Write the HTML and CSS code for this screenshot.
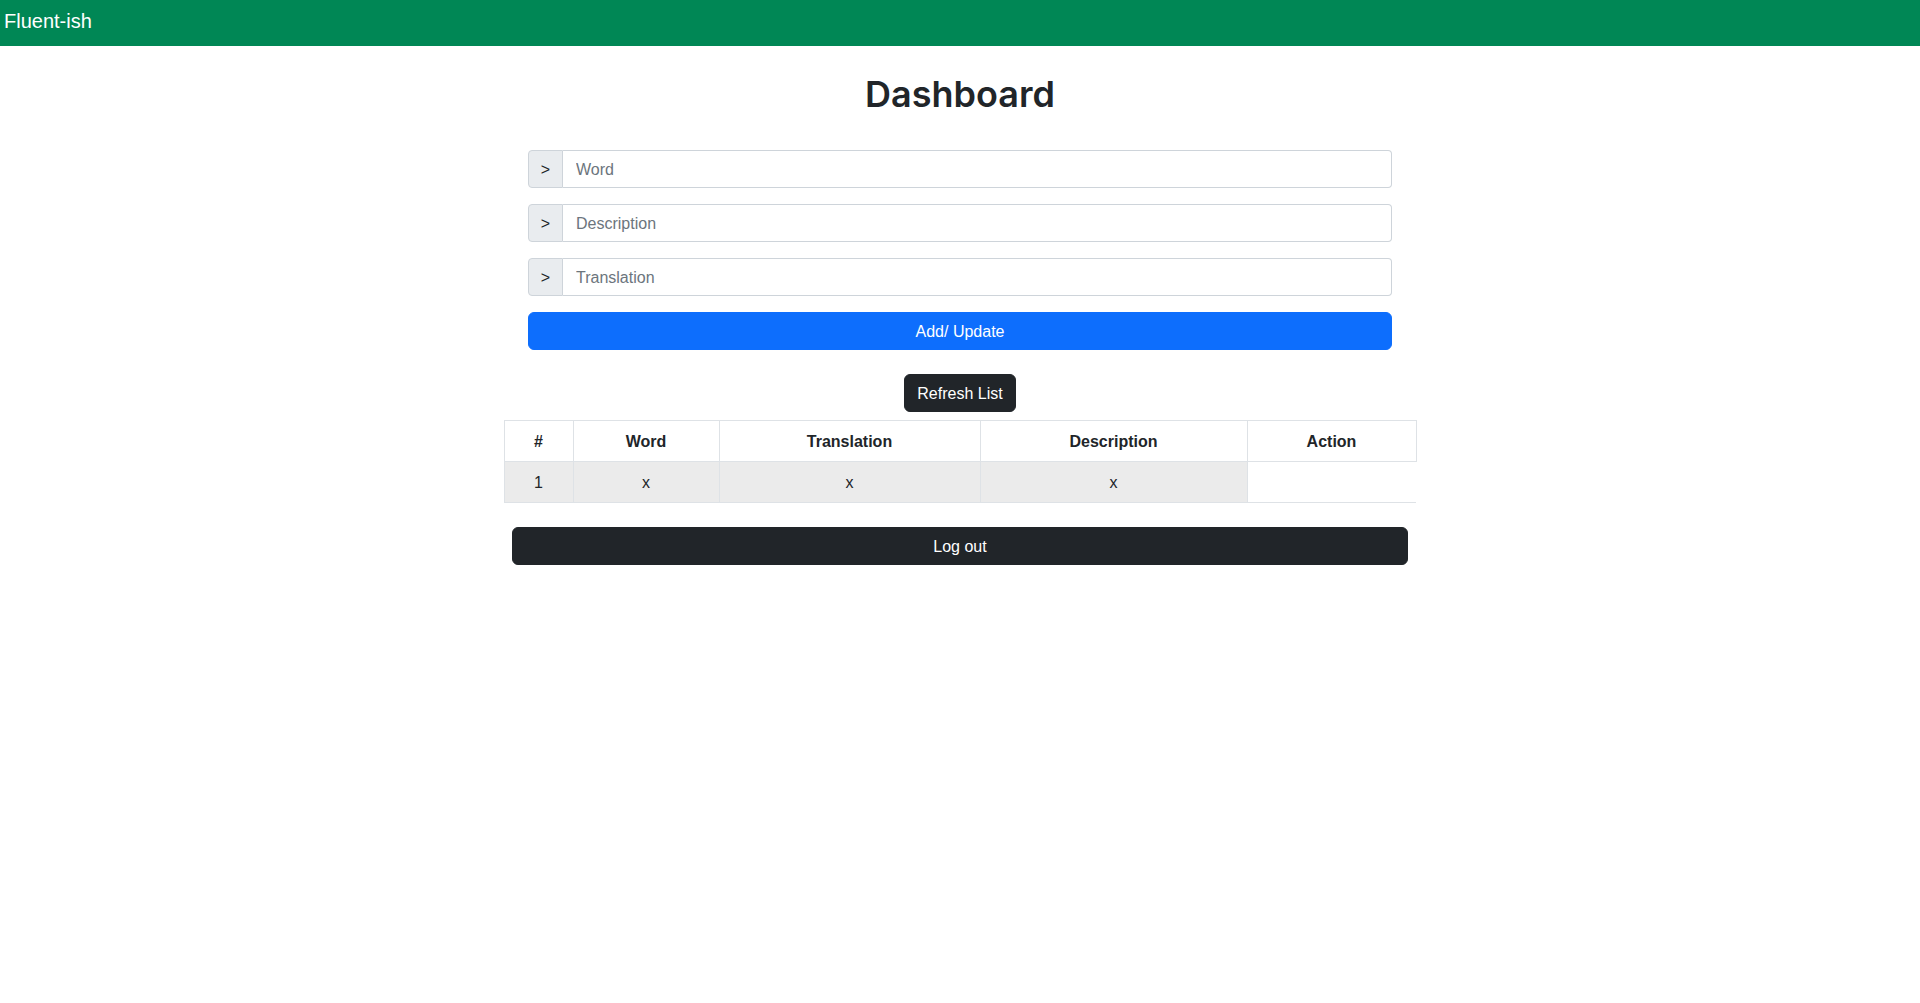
FILE: index.html
```html
<!DOCTYPE html>
<html lang="en">
<head>
<meta charset="utf-8">
<title>Fluent-ish</title>
<link rel="stylesheet" href="styles.css">
</head>
<body>
<nav class="navbar">
  <span class="brand">Fluent-ish</span>
</nav>
<main class="page">
  <h1 class="title">Dashboard</h1>
  <form class="entry-form">
    <div class="input-group">
      <span class="prefix">&gt;</span>
      <input class="field" type="text" placeholder="Word">
    </div>
    <div class="input-group">
      <span class="prefix">&gt;</span>
      <input class="field" type="text" placeholder="Description">
    </div>
    <div class="input-group">
      <span class="prefix">&gt;</span>
      <input class="field" type="text" placeholder="Translation">
    </div>
    <button type="button" class="btn btn-primary btn-block">Add/ Update</button>
  </form>
  <button type="button" class="btn btn-dark btn-refresh">Refresh List</button>
  <table class="words">
    <colgroup>
      <col class="c-num"><col class="c-word"><col class="c-trans"><col class="c-desc"><col class="c-act">
    </colgroup>
    <thead>
      <tr><th>#</th><th>Word</th><th>Translation</th><th>Description</th><th>Action</th></tr>
    </thead>
    <tbody>
      <tr><td>1</td><td>x</td><td>x</td><td>x</td><td class="blank"></td></tr>
    </tbody>
  </table>
  <button type="button" class="btn btn-dark btn-logout">Log out</button>
</main>
</body>
</html>
```
FILE: styles.css
```css
* { box-sizing: border-box; }
html, body { margin: 0; padding: 0; }
body {
  font-family: "Liberation Sans", Arial, sans-serif;
  font-size: 16px;
  line-height: 1.5;
  color: #212529;
  background: #fff;
}
.navbar {
  background: #008755;
  height: 46px;
  padding: 6px 4px 10px;
  display: flex;
  align-items: center;
}
.brand {
  color: #fff;
  font-size: 20px;
  line-height: 30px;
}
.page {
  display: flex;
  flex-direction: column;
  align-items: center;
  padding-top: 27px;
}
.title {
  font-family: Inter, "Liberation Sans", sans-serif;
  font-weight: 600;
  font-size: 36px;
  line-height: 1.2;
  margin: 0 0 34px;
}
.entry-form {
  width: 864px;
  display: flex;
  flex-direction: column;
  gap: 16px;
}
.input-group {
  display: flex;
  height: 38px;
}
.prefix {
  width: 35px;
  display: flex;
  align-items: center;
  justify-content: center;
  background: #e9ecef;
  border: 1px solid #ced4da;
  border-radius: 4px 0 0 4px;
  font-size: 16px;
  color: #212529;
  padding-top: 1px;
}
.field {
  flex: 1;
  border: 1px solid #ced4da;
  border-left: none;
  border-radius: 0 4px 4px 0;
  padding: 7px 13px 5px;
  font-family: inherit;
  font-size: 16px;
  line-height: 24px;
  color: #212529;
  outline: none;
}
.field::placeholder { color: #6c757d; }
.btn {
  font-family: inherit;
  font-size: 16px;
  line-height: 24px;
  height: 38px;
  padding: 7px 12px 5px;
  border: 1px solid transparent;
  border-radius: 6px;
  color: #fff;
  cursor: pointer;
}
.btn-primary { background: #0d6efd; border-color: #0d6efd; }
.btn-dark { background: #212529; border-color: #212529; }
.btn-block { width: 100%; }
.btn-refresh {
  margin-top: 24px;
  width: 112px;
}
.words {
  margin-top: 8px;
  width: 912px;
  border-collapse: collapse;
  table-layout: fixed;
}
.c-num { width: 69px; }
.c-word { width: 146px; }
.c-trans { width: 261px; }
.c-desc { width: 267px; }
.c-act { width: 169px; }
.words th, .words td {
  border: 1px solid #dee2e6;
  padding: 9px 8px 7px;
  text-align: center;
  line-height: 24px;
}
.words th { font-weight: 700; }
.words tbody td { background: #ebebeb; }
.words tbody td.blank {
  background: #fff;
  border-right: none;
}
.btn-logout {
  margin-top: 24px;
  width: 896px;
}
```
